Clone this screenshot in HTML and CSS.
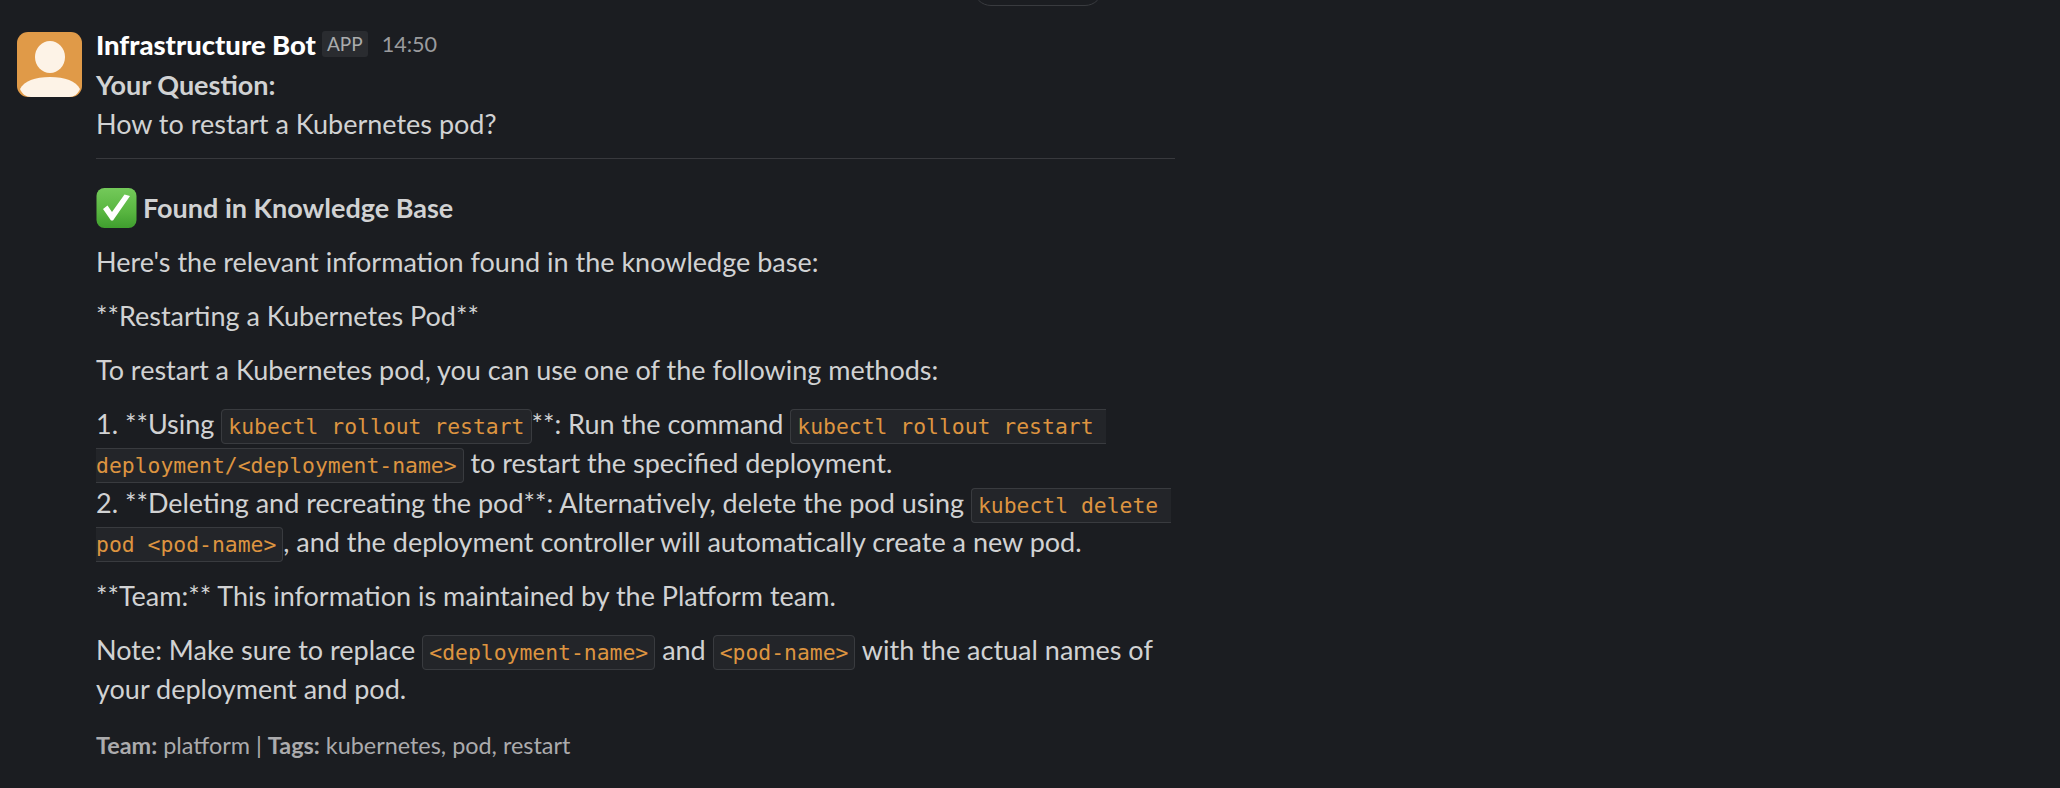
FILE: index.html
```html
<!DOCTYPE html>
<html lang="en">
<head>
<meta charset="utf-8">
<title>Infrastructure Bot</title>
<link rel="stylesheet" href="styles.css">
</head>
<body>
<div class="date-pill"></div>
<div class="message">
  <svg class="avatar" viewBox="0 0 65 65" aria-hidden="true">
    <rect width="65" height="65" rx="11" fill="#e09a48"/>
    <ellipse cx="33" cy="25" rx="15" ry="16" fill="#fdf3e7"/>
    <path d="M3 57C7 49 18 45 33 45C48 45 59 49 63 57C61 62 57 65 52 65H14C9 65 5 62 3 57Z" fill="#fdf3e7"/>
  </svg>
  <div class="content">
    <div class="head"><span class="name">Infrastructure Bot</span><span class="badge">APP</span><span class="time">14:50</span></div>
    <div class="line"><b>Your Question:</b></div>
    <div class="line">How to restart a Kubernetes pod?</div>
    <hr class="rule">
    <p class="title"><svg class="check" viewBox="0 0 40 40" aria-hidden="true"><defs><linearGradient id="g" x1="0" y1="0" x2="0" y2="1"><stop offset="0" stop-color="#74c95a"/><stop offset="0.6" stop-color="#58b540"/><stop offset="1" stop-color="#3f9e2e"/></linearGradient></defs><rect width="40" height="40" rx="8" fill="url(#g)"/><path d="M6.500 21L11 17.500L15.500 24L28 6.500L33.500 8L16.500 32.500H14.500Z" fill="#fff"/></svg><b>Found in Knowledge Base</b></p>
    <p>Here's the relevant information found in the knowledge base:</p>
    <p>**Restarting a Kubernetes Pod**</p>
    <p>To restart a Kubernetes pod, you can use one of the following methods:</p>
    <p>1. **Using <code>kubectl rollout restart</code>**: Run the command <code>kubectl rollout restart deployment/&lt;deployment-name&gt;</code> to restart the specified deployment.<br>2. **Deleting and recreating the pod**: Alternatively, delete the pod using <code>kubectl delete pod &lt;pod-name&gt;</code>, and the deployment controller will automatically create a new pod.</p>
    <p>**Team:** This information is maintained by the Platform team.</p>
    <p>Note: Make sure to replace <code>&lt;deployment-name&gt;</code> and <code>&lt;pod-name&gt;</code> with the actual names of your deployment and pod.</p>
    <p class="meta"><b>Team:</b> platform | <b>Tags:</b> kubernetes, pod, restart</p>
  </div>
</div>
</body>
</html>
```

FILE: styles.css
```css
html, body {
  margin: 0;
  height: 788px;
  overflow: hidden;
  background: #1b1d21;
}
body {
  position: relative;
  font-family: "Lato", sans-serif;
  font-size: 27px;
  line-height: 39.500px;
  color: #d1d2d3;
}
.date-pill {
  position: absolute;
  left: 973px;
  top: -30px;
  width: 130px;
  height: 36px;
  box-sizing: border-box;
  border: 1px solid #393b3f;
  border-radius: 20px;
}
.message {
  display: flex;
  gap: 14px;
  padding: 25px 0 0 17px;
}
.avatar {
  flex: none;
  width: 65px;
  height: 65px;
  margin-top: 7px;
}
.content {
  width: 1079px;
}
.head {
  display: flex;
  align-items: center;
  height: 39.600px;
}
.name {
  font-size: 27.400px;
  font-weight: 900;
  color: #fff;
}
.badge {
  margin-left: 6px;
  padding: 0 5px;
  height: 26px;
  line-height: 26px;
  font-size: 19px;
  color: #abacad;
  background: #2a2c30;
  border-radius: 3px;
  margin-bottom: 2px;
}
.time {
  margin-left: 14px;
  font-size: 21.600px;
  color: #9a9b9d;
}
.line b, .title b {
  font-weight: 700;
}
.rule {
  margin: 14px 0 0;
  border: 0;
  border-top: 1px solid #38393d;
}
.title {
  display: flex;
  align-items: center;
  gap: 6px;
  margin-top: 29px;
}
.check {
  width: 41px;
  height: 40px;
}
p {
  margin: 14.400px 0 0;
}
code {
  font-family: "DejaVu Sans Mono", monospace;
  font-size: 21.400px;
  line-height: 1;
  white-space: break-spaces;
  color: #dd9440;
  background: #232529;
  border: 1px solid #393b3f;
  border-radius: 4px;
  padding: 4px 6px;
}
.meta {
  margin-top: 17px;
  font-size: 23.400px;
  color: #ababad;
}
```
